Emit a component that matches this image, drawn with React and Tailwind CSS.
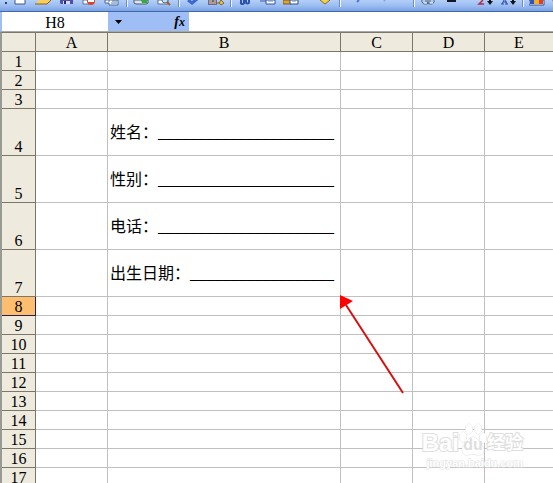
import React from 'react';

const FIELDS = {
  4: '姓名：______________________',
  5: '性别：______________________',
  6: '电话：______________________',
  7: '出生日期：__________________',
};

const ROWS = Array.from({ length: 17 }, (_, i) => i + 1);
const ACTIVE_ROW = 8;

const ToolButton = ({ label, split, children }) => (
  <button
    type="button"
    aria-label={label}
    className={`flex h-3 shrink-0 items-start ${split ? 'w-[34px]' : 'w-[23px]'}`}
  >
    <svg viewBox="0 0 16 6" className="ml-[3px] h-[6px] w-4">
      {children}
    </svg>
  </button>
);

const Separator = () => (
  <div className="flex h-3 w-[6px] shrink-0 justify-center">
    <div className="h-[7px] w-[2px] border-l border-[#6a8ccb] bg-[#f1f6ff]" />
  </div>
);

const Toolbar = () => (
  <div
    role="toolbar"
    className="flex h-3 shrink-0 overflow-hidden border-b border-[#3f68a8] bg-linear-to-b from-[#b4cff8] via-[#9dbef2] to-[#7ba2e3]"
  >
    <div className="h-3 w-[9px] shrink-0 pt-[2px] pl-[5px]">
      <div className="h-[2px] w-[2px] bg-[#27417a]" />
    </div>
    <ToolButton label="New">
      <path d="M3 0h10v4H3z" fill="#fff" />
      <path d="M3 0v4h10V0" fill="none" stroke="#3d5685" />
    </ToolButton>
    <ToolButton label="Open">
      <path d="M1 4L4 0h12l-4 4z" fill="#f8cf5c" />
      <path d="M0 4h12l4-4" fill="none" stroke="#8a6116" />
    </ToolButton>
    <ToolButton label="Save">
      <path d="M2 0h13v4H3L2 3z" fill="#4d50a8" />
      <path d="M5 1h7v3H5z" fill="#d9daf2" />
      <path d="M6 1h2v3H6z" fill="#2b2c66" />
    </ToolButton>
    <ToolButton label="Permission">
      <path d="M2 0v4h8V0z" fill="#fff" stroke="#56709f" />
      <circle cx="10" cy="1" r="4" fill="#d8452c" />
      <path d="M7 0h6v2H7z" fill="#fff" />
    </ToolButton>
    <ToolButton label="E-mail">
      <path d="M1 0h13v5H5V3H1z" fill="#fff" stroke="#44659e" />
      <path d="M4 1h2M8 1h5M7 3h6" stroke="#5b78ac" />
    </ToolButton>
    <Separator />
    <ToolButton label="Print">
      <path d="M1 0h14v3l-2 1H3L1 3z" fill="#dfe4ec" stroke="#4b5b77" />
      <path d="M8 0h6v3H9z" fill="#2fae3a" />
    </ToolButton>
    <ToolButton label="Print Preview">
      <path d="M2 0h10v4H2z" fill="#fff" stroke="#566d96" />
      <circle cx="9" cy="0" r="3" fill="#bcdcf4" stroke="#59708f" />
      <path d="M11 2l3 3" stroke="#a2622a" strokeWidth="2" />
    </ToolButton>
    <Separator />
    <ToolButton label="Spelling">
      <path d="M3 0l4 3 5-4" fill="none" stroke="#3b68cf" strokeWidth="3" />
    </ToolButton>
    <ToolButton label="Research">
      <path d="M0 0h9v5H0z" fill="#6f68a0" />
      <path d="M1 1h3M1 3h7M6 1h2" stroke="#f0d46a" />
      <path d="M8 3h3l2-3 3 3-3 2-2-2" fill="#e9bf45" stroke="#7d6428" />
    </ToolButton>
    <Separator />
    <ToolButton label="Cut">
      <path d="M4 0v2a1 1 0 0 0 3 1V0M9 0v2a1 1 0 0 0 3 0V0" fill="none" stroke="#2b52ad" strokeWidth="2" />
    </ToolButton>
    <ToolButton label="Copy">
      <path d="M0 1h6" stroke="#3b5ea5" />
      <path d="M6 0h9v4H6z" fill="#fff" stroke="#2f529c" />
      <path d="M8 1h5" stroke="#6f8dc5" />
    </ToolButton>
    <ToolButton label="Paste" split>
      <path d="M0 0h8v4H0z" fill="#dda334" stroke="#7d591c" />
      <path d="M7 0h8v4H7z" fill="#fff" stroke="#2f4f8c" />
      <path d="M9 1h4" stroke="#6f8dc5" />
    </ToolButton>
    <ToolButton label="Format Painter">
      <path d="M3 0l5 4 5-4z" fill="#f3ce4f" />
      <path d="M3 0l5 4 5-4" fill="none" stroke="#886c22" />
    </ToolButton>
    <Separator />
    <ToolButton label="Undo" split>
      <path d="M11 2l2-2" stroke="#4f78cd" strokeWidth="2" />
    </ToolButton>
    <ToolButton label="Redo" split>
      <path d="M4 0l1 1" stroke="#7e9fda" strokeWidth="2" />
    </ToolButton>
    <Separator />
    <ToolButton label="Insert Hyperlink">
      <path d="M2 0a3 3 0 0 0 3 4h1a3 3 0 0 0 3-2M7 2a3 3 0 0 0 3 2h1a3 3 0 0 0 3-4M5 1h6" fill="none" stroke="#52606f" />
      <path d="M4 3h3M10 3h3" stroke="#eef3f7" />
    </ToolButton>
    <ToolButton label="AutoSum" split>
      <path d="M4 1h9M12 0v2" stroke="#101828" strokeWidth="2" />
    </ToolButton>
    <ToolButton label="Sort Ascending">
      <path d="M6 0L2 4h5" fill="none" stroke="#b12c4a" strokeWidth="1.5" />
      <path d="M10 1h6l-3 4zM12 0h2v2h-2z" fill="#14151c" />
    </ToolButton>
    <ToolButton label="Sort Descending">
      <path d="M4 0L2 4M5 0l2 4M3 2h4M1 4h3M5 4h3" fill="none" stroke="#2c4fa8" />
      <path d="M10 1h6l-3 4zM12 0h2v2h-2z" fill="#14151c" />
    </ToolButton>
    <Separator />
    <ToolButton label="Chart Wizard">
      <path d="M0 0h15v5H0z" fill="#fff" stroke="#3b4c86" />
      <path d="M1 0h4v4H1z" fill="#2d55c5" />
      <path d="M5 0h5v4H5z" fill="#f0b02c" />
      <path d="M10 0h4v4h-4z" fill="#d9422a" />
    </ToolButton>
    <ToolButton label="Drawing">
      <path d="M1 0l3 3" stroke="#7a4a72" strokeWidth="2" />
    </ToolButton>
  </div>
);

const FormulaBar = () => (
  <div className="flex h-[19px] shrink-0 bg-[#9ebef5] pl-[2px]">
    <input
      aria-label="Name box"
      defaultValue="H8"
      className="w-[106px] bg-white pt-[2px] text-center leading-4 outline-none"
    />
    <button type="button" aria-label="Cell names" className="flex w-5 items-center justify-center">
      <svg viewBox="0 0 7 4" className="h-1 w-[7px]">
        <path d="M0 0h7L3.500 4z" fill="#000" />
      </svg>
    </button>
    <button
      type="button"
      aria-label="Insert function"
      className="flex w-[61px] items-center justify-end pr-1 text-sm leading-4 font-bold italic"
    >
      f<span className="text-xs">x</span>
    </button>
    <input aria-label="Formula" className="min-w-0 flex-1 bg-white px-1 outline-none" />
  </div>
);

const Arrow = () => (
  <svg viewBox="0 0 64 100" className="pointer-events-none absolute -top-[2px] -left-px z-10 h-[100px] w-16">
    <path d="M6 10L63 98" stroke="#d80f0f" strokeWidth="2" />
    <path d="M0 0l13 6L0 14z" fill="#fe0000" />
  </svg>
);

const Sheet = () => (
  <table className="w-full table-fixed border-separate border-spacing-0 border-t border-l-2 border-t-[#7b7869] border-l-[#9a9a94]">
    <colgroup>
      <col className="w-[34px]" />
      <col className="w-[72px]" />
      <col className="w-[233px]" />
      <col className="w-[72px]" />
      <col className="w-[72px]" />
      <col />
    </colgroup>
    <thead>
      <tr className="h-[19px] bg-[#eeeade]">
        {['', 'A', 'B', 'C', 'D', 'E'].map((name) => (
          <th
            key={name}
            scope="col"
            className="border-r border-b border-[#7b7869] p-0 pt-[2px] font-normal leading-4 last:border-r-0"
          >
            {name}
          </th>
        ))}
      </tr>
    </thead>
    <tbody>
      {ROWS.map((row) => (
        <tr key={row} className={FIELDS[row] ? 'h-[47px]' : 'h-[19px]'}>
          <th
            scope="row"
            className={`border-r border-b p-0 align-bottom font-normal leading-4 ${
              row === ACTIVE_ROW ? 'border-[#2c1a4d] bg-[#fdbe6f]' : 'border-[#7b7869] bg-[#eeeade]'
            }`}
          >
            {row}
          </th>
          <td className="border-r border-b border-[#c0c0c0] p-0" />
          <td className="border-r border-b border-[#c0c0c0] p-0 pt-[2px] pl-[2px] leading-4 whitespace-nowrap">
            {FIELDS[row]}
          </td>
          <td className="relative border-r border-b border-[#c0c0c0] p-0">
            {row === ACTIVE_ROW && <Arrow />}
          </td>
          <td className="border-r border-b border-[#c0c0c0] p-0" />
          <td className="border-b border-[#c0c0c0] p-0" />
        </tr>
      ))}
    </tbody>
  </table>
);

const Watermark = () => (
  <div className="pointer-events-none absolute right-[30px] bottom-[14px] font-['Liberation_Sans','Noto_Sans_CJK_SC',sans-serif] font-bold text-white [-webkit-text-stroke:2px_#dedede] [paint-order:stroke_fill]">
    <div className="flex h-9 items-end justify-end">
      <span className="text-2xl leading-7">Bai</span>
      <span className="relative flex h-9 w-7 items-end justify-center">
        <svg viewBox="0 0 28 36" className="absolute inset-0 h-9 w-7" fill="#fff" stroke="#dedede">
          <ellipse cx="4" cy="16" rx="3.500" ry="5" />
          <ellipse cx="10" cy="8" rx="3.500" ry="5" />
          <ellipse cx="19" cy="8" rx="3.500" ry="5" />
          <ellipse cx="24" cy="17" rx="3.500" ry="5" />
          <path d="M14 16c4 0 5 4 8 7 4 4 4 11-2 11-3 0-4-1-6-1s-3 1-6 1c-6 0-6-7-2-11 3-3 4-7 8-7z" />
        </svg>
        <span className="relative text-base leading-6 text-[#dedede] [-webkit-text-stroke:0]">du</span>
      </span>
      <span className="text-lg leading-7">经验</span>
    </div>
    <div className="text-right text-[11px] leading-3 [-webkit-text-stroke:1px_#dedede]">jingyan.baidu.com</div>
  </div>
);

const App = () => {
  return (
    <div className="relative flex h-screen flex-col overflow-hidden bg-white font-['Liberation_Serif','Noto_Sans_CJK_SC',serif] text-base text-black">
      <Toolbar />
      <FormulaBar />
      <div className="min-h-0 flex-1 overflow-hidden border-t border-[#a8a8a4]">
        <Sheet />
      </div>
      <Watermark />
    </div>
  );
};

export default App;
